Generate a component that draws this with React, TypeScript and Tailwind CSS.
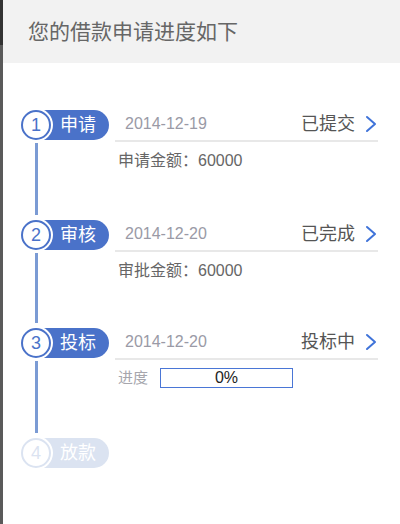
import React from "react";

type Step = {
  no: number;
  name: string;
  date?: string;
  status?: string;
  detail?: React.ReactNode;
  height: string;
  done: boolean;
};

const font = "font-['Liberation_Sans','Noto_Sans_CJK_SC',sans-serif]";

function Chevron() {
  return (
    <svg width="14" height="18" viewBox="0 0 14 18" className="ml-[9px]">
      <polyline points="3,2 11,9 3,16" fill="none" stroke="#3f73d9" strokeWidth="2" strokeLinecap="round" strokeLinejoin="round" />
    </svg>
  );
}

function Badge({ no, name, done }: { no: number; name: string; done: boolean }) {
  const pill = done ? "bg-[#4a72c9]" : "bg-[#dbe3f1]";
  const ring = done ? "border-[#4a72c9] text-[#4a72c9]" : "border-[#dbe3f1] text-[#dbe3f1]";
  return (
    <div className="relative w-[88px] h-[30px] shrink-0">
      <div className={`absolute left-[15px] right-0 top-0 bottom-0 rounded-r-full ${pill} flex items-center pl-[24px] text-white text-[18px]`}>
        {name}
      </div>
      <div className={`absolute left-0 top-0 w-[30px] h-[30px] rounded-full bg-white border-2 ${ring} shadow-[0_0_0_2px_#fff] flex items-center justify-center text-[18px] leading-none`}>
        {no}
      </div>
    </div>
  );
}

export default function App() {
  const steps: Step[] = [
    {
      no: 1,
      name: "申请",
      date: "2014-12-19",
      status: "已提交",
      detail: <span>申请金额：60000</span>,
      height: "h-[110px]",
      done: true,
    },
    {
      no: 2,
      name: "审核",
      date: "2014-12-20",
      status: "已完成",
      detail: <span>审批金额：60000</span>,
      height: "h-[108px]",
      done: true,
    },
    {
      no: 3,
      name: "投标",
      date: "2014-12-20",
      status: "投标中",
      detail: (
        <div className="flex items-center">
          <span className="text-[#a6a6ad] mr-[12px] text-[15px]">进度</span>
          <div className="w-[133px] h-[20px] border border-[#4a76d6] flex items-center justify-center text-[16px] text-[#222]">
            0%
          </div>
        </div>
      ),
      height: "h-[110px]",
      done: true,
    },
    { no: 4, name: "放款", height: "h-[40px]", done: false },
  ];

  return (
    <div className={`w-[400px] h-[524px] bg-white flex ${font}`}>
      <div className="w-[3px] flex flex-col shrink-0">
        <div className="h-[45px] bg-[#333]" />
        <div className="flex-1 bg-[#5a5a5a]" />
      </div>
      <div className="flex-1 flex flex-col">
        <div className="h-[63px] bg-[#f2f2f2] flex items-center pl-[25px] text-[21px] text-[#666]">
          您的借款申请进度如下
        </div>
        <div className="pt-[47px] flex flex-col">
          {steps.map((s, i) => (
            <div key={s.no} className={`${s.height} flex`}>
              <div className="w-[112px] pl-[18px] flex flex-col shrink-0">
                <Badge no={s.no} name={s.name} done={s.done} />
                {i < steps.length - 1 && (
                  <div className="ml-[14px] w-[3px] flex-1 mt-[3px] mb-[5px] bg-[#7b9bd4]" />
                )}
              </div>
              {s.date && (
                <div className="flex-1 mr-[22px] flex flex-col">
                  <div className="h-[32px] border-b-2 border-[#e8e8e8] flex items-center pl-[10px] pb-[2px]">
                    <span className="text-[16px] text-[#9a9aa6]">{s.date}</span>
                    <span className="ml-auto text-[18px] text-[#555]">{s.status}</span>
                    <Chevron />
                  </div>
                  <div className="mt-[7px] pl-[3px] text-[16px] text-[#666]">{s.detail}</div>
                </div>
              )}
            </div>
          ))}
        </div>
      </div>
    </div>
  );
}
